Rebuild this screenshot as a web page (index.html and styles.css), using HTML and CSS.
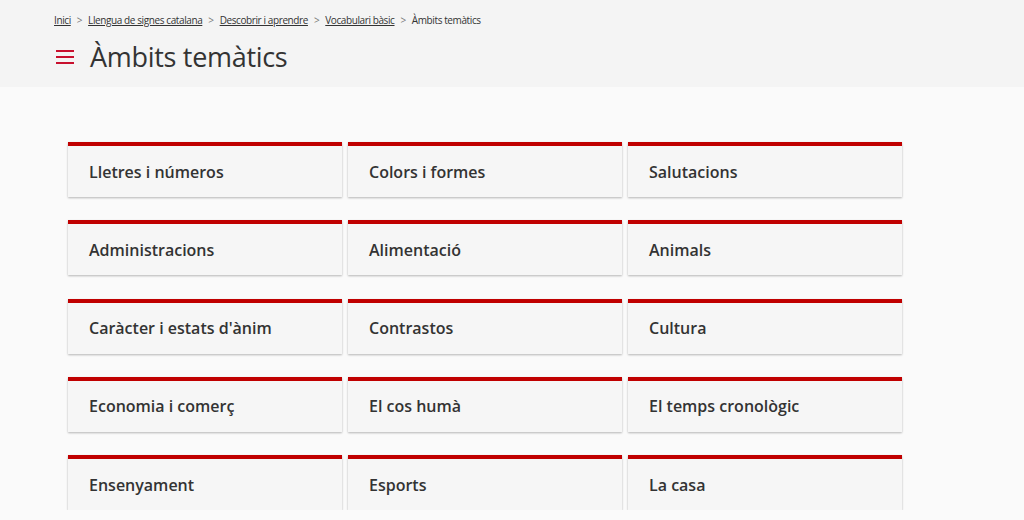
FILE: index.html
```html
<!DOCTYPE html>
<html lang="ca">
<head>
<meta charset="utf-8">
<title>Àmbits temàtics</title>
<link rel="stylesheet" href="styles.css">
</head>
<body>
<header class="page-header">
  <nav class="breadcrumb">
    <a href="#">Inici</a><span class="sep">&gt;</span>
    <a href="#">Llengua de signes catalana</a><span class="sep">&gt;</span>
    <a href="#">Descobrir i aprendre</a><span class="sep">&gt;</span>
    <a href="#">Vocabulari bàsic</a><span class="sep">&gt;</span>
    <span class="current">Àmbits temàtics</span>
  </nav>
  <div class="title-row">
    <svg class="menu-icon" width="18" height="14" viewBox="0 0 18 14" aria-hidden="true">
      <rect x="0" y="0" width="18" height="2" fill="#c8102e"/>
      <rect x="0" y="6" width="18" height="2" fill="#c8102e"/>
      <rect x="0" y="12" width="18" height="2" fill="#c8102e"/>
    </svg>
    <h1 class="title">Àmbits temàtics</h1>
  </div>
</header>
<main class="content">
  <div class="grid">
    <a class="card" href="#">Lletres i números</a>
    <a class="card" href="#">Colors i formes</a>
    <a class="card" href="#">Salutacions</a>
    <a class="card" href="#">Administracions</a>
    <a class="card" href="#">Alimentació</a>
    <a class="card" href="#">Animals</a>
    <a class="card" href="#">Caràcter i estats d'ànim</a>
    <a class="card" href="#">Contrastos</a>
    <a class="card" href="#">Cultura</a>
    <a class="card" href="#">Economia i comerç</a>
    <a class="card" href="#">El cos humà</a>
    <a class="card" href="#">El temps cronològic</a>
    <a class="card" href="#">Ensenyament</a>
    <a class="card" href="#">Esports</a>
    <a class="card" href="#">La casa</a>
  </div>
</main>
</body>
</html>
```
FILE: styles.css
```css
html, body {
  margin: 0;
  padding: 0;
}
body {
  background: #fafafa;
  font-family: "Open Sans", "Noto Sans", sans-serif;
  color: #333;
  overflow: hidden;
}
.page-header {
  background: #f4f4f4;
  height: 87px;
  box-sizing: border-box;
  padding: 12px 0 0 54px;
}
.breadcrumb {
  font-size: 10px;
  letter-spacing: -0.4px;
  line-height: 16px;
  color: #333;
  display: flex;
  align-items: center;
}
.breadcrumb a {
  color: #333;
  text-decoration: underline;
}
.breadcrumb .sep {
  color: #777;
  margin: 0 6px;
}
.title-row {
  display: flex;
  align-items: center;
  margin-top: 13px;
  padding-left: 2px;
}
.menu-icon {
  display: block;
  margin-right: 16px;
}
.title {
  margin: 0;
  font-size: 27px;
  letter-spacing: -0.3px;
  font-weight: 400;
  line-height: 32px;
  color: #333;
}
.content {
  padding: 55px 0 0 68px;
}
.grid {
  display: grid;
  grid-template-columns: repeat(3, 274px);
  column-gap: 6px;
  row-gap: 23.3px;
}
.card {
  display: flex;
  align-items: center;
  height: 51px;
  padding-left: 21px;
  border-top: 4px solid #c00000;
  background: #f6f6f6;
  box-shadow: 0 1px 2px rgba(0, 0, 0, 0.28);
  font-size: 16px;
  font-weight: 600;
  color: #333;
  text-decoration: none;
}
```
